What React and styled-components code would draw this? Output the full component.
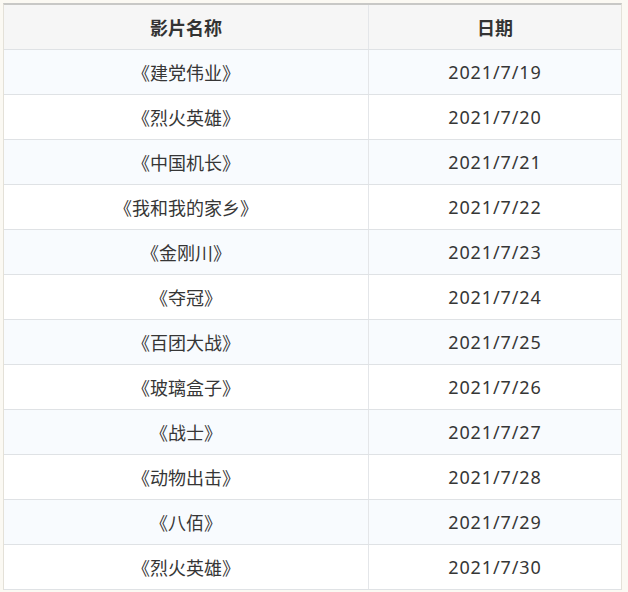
import React from 'react';
import styled, { createGlobalStyle } from 'styled-components';

const GlobalStyle = createGlobalStyle`
  body {
    margin: 0;
    background: #fbf9f3;
    font-family: "Noto Sans", "Noto Sans CJK SC", sans-serif;
  }
`;

const Frame = styled.div`
  margin: 3px 6px 0 3px;
  border-top: 2px solid #c8c8c6;
  border-left: 1px solid #e4e1d8;
  border-right: 1px solid #e4e1d8;
  background: #ffffff;
`;

const Table = styled.table`
  width: 100%;
  border-collapse: collapse;
  table-layout: fixed;
  color: #333;
`;

const HeadCell = styled.th`
  height: 44px;
  padding: 0;
  background: #f6f6f6;
  font-size: 18px;
  font-weight: 700;
  color: #333;
  text-align: center;
  border-bottom: 1px solid #dfe2e5;
  border-left: ${p => (p.$divider ? '1px solid #e4e6e9' : 'none')};
  width: ${p => p.$width};
`;

const Row = styled.tr`
  background: ${p => (p.$striped ? '#f8fbfe' : '#ffffff')};
`;

const Cell = styled.td`
  height: 44px;
  padding: 0;
  font-size: 18px;
  text-align: center;
  color: #363636;
  letter-spacing: ${p => (p.$date ? '0.9px' : '0')};
  border-bottom: 1px solid #dfe2e5;
  border-left: ${p => (p.$date ? '1px solid #e4e6e9' : 'none')};
`;

const films = [
  ['《建党伟业》', '2021/7/19'],
  ['《烈火英雄》', '2021/7/20'],
  ['《中国机长》', '2021/7/21'],
  ['《我和我的家乡》', '2021/7/22'],
  ['《金刚川》', '2021/7/23'],
  ['《夺冠》', '2021/7/24'],
  ['《百团大战》', '2021/7/25'],
  ['《玻璃盒子》', '2021/7/26'],
  ['《战士》', '2021/7/27'],
  ['《动物出击》', '2021/7/28'],
  ['《八佰》', '2021/7/29'],
  ['《烈火英雄》', '2021/7/30'],
];

export default function App() {
  return (
    <>
      <GlobalStyle />
      <Frame>
        <Table>
          <thead>
            <tr>
              <HeadCell $width="364px">影片名称</HeadCell>
              <HeadCell $divider>日期</HeadCell>
            </tr>
          </thead>
          <tbody>
            {films.map(([name, date], i) => (
              <Row key={date} $striped={i % 2 === 0}>
                <Cell>{name}</Cell>
                <Cell $date>{date}</Cell>
              </Row>
            ))}
          </tbody>
        </Table>
      </Frame>
    </>
  );
}
